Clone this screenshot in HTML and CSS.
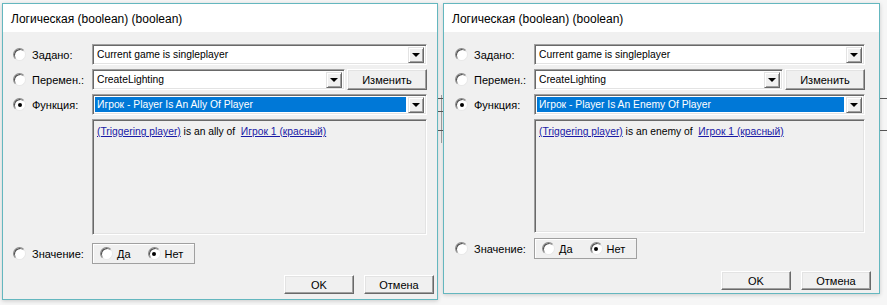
FILE: index.html
```html
<!DOCTYPE html>
<html lang="ru">
<head>
<meta charset="utf-8">
<title>Логическая (boolean)</title>
<link rel="stylesheet" href="styles.css">
</head>
<body>
<div class="screen">
  <div class="dialog dialog--a">
    <div class="titlebar">Логическая (boolean) (boolean)</div>
    <div class="body">
      <div class="row">
        <label class="opt"><span class="radio"></span>Задано:</label>
        <div class="combo combo--full"><span class="combo-text">Current game is singleplayer</span><span class="arrow"></span></div>
      </div>
      <div class="row">
        <label class="opt"><span class="radio"></span>Перемен.:</label>
        <div class="combo combo--short"><span class="combo-text">CreateLighting</span><span class="arrow"></span></div>
        <button class="btn btn--edit">Изменить</button>
      </div>
      <div class="row">
        <label class="opt"><span class="radio radio--on"></span>Функция:</label>
        <div class="combo combo--full"><span class="combo-text combo-text--sel">Игрок - Player Is An Ally Of Player</span><span class="arrow"></span></div>
      </div>
      <div class="textbox">
        <a class="lnk">(Triggering player)</a> is an ally of&nbsp; <a class="lnk">Игрок 1 (красный)</a>
      </div>
      <div class="row row--value">
        <label class="opt"><span class="radio"></span>Значение:</label>
        <div class="group">
          <span class="gopt"><span class="radio"></span>Да</span>
          <span class="gopt"><span class="radio radio--on"></span>Нет</span>
        </div>
      </div>
      <div class="actions">
        <button class="btn btn--act">OK</button>
        <button class="btn btn--act">Отмена</button>
      </div>
    </div>
  </div>

  <div class="gapdeco">
    <span class="vline"></span>
    <span class="tick t1"></span><span class="tick t2"></span><span class="tick t3"></span>
  </div>

  <div class="dialog dialog--b">
    <div class="titlebar">Логическая (boolean) (boolean)</div>
    <div class="body">
      <div class="row">
        <label class="opt"><span class="radio"></span>Задано:</label>
        <div class="combo combo--full"><span class="combo-text">Current game is singleplayer</span><span class="arrow"></span></div>
      </div>
      <div class="row">
        <label class="opt"><span class="radio"></span>Перемен.:</label>
        <div class="combo combo--short"><span class="combo-text">CreateLighting</span><span class="arrow"></span></div>
        <button class="btn btn--edit">Изменить</button>
      </div>
      <div class="row">
        <label class="opt"><span class="radio radio--on"></span>Функция:</label>
        <div class="combo combo--full"><span class="combo-text combo-text--sel">Игрок - Player Is An Enemy Of Player</span><span class="arrow"></span></div>
      </div>
      <div class="textbox">
        <a class="lnk">(Triggering player)</a> is an enemy of&nbsp; <a class="lnk">Игрок 1 (красный)</a>
      </div>
      <div class="row row--value">
        <label class="opt"><span class="radio"></span>Значение:</label>
        <div class="group">
          <span class="gopt"><span class="radio"></span>Да</span>
          <span class="gopt"><span class="radio radio--on"></span>Нет</span>
        </div>
      </div>
      <div class="actions">
        <button class="btn btn--act">OK</button>
        <button class="btn btn--act">Отмена</button>
      </div>
    </div>
  </div>

  <div class="gapdeco gapdeco--end">
    <span class="tick t1"></span><span class="tick t3"></span>
  </div>
</div>
</body>
</html>
```

FILE: styles.css
```css
html, body {
  margin: 0;
  padding: 0;
}
body {
  background: #f6f6f6;
  font-family: "Liberation Sans", Arial, sans-serif;
  font-size: 11px;
  color: #000;
  width: 887px;
  height: 305px;
  overflow: hidden;
}
.screen {
  display: flex;
  align-items: flex-start;
  padding: 3px 0 0 2px;
}
.dialog {
  border: 1px solid #64b7bf;
  background: #f0f0f0;
  display: flex;
  flex-direction: column;
  box-shadow: 0 1px 4px rgba(0,0,0,0.18);
  flex-shrink: 0;
}
.dialog--a {
  width: 434px;
  height: 295px;
}
.dialog--b {
  width: 435px;
  height: 289px;
}
.titlebar {
  background: #fff;
  height: 28px;
  line-height: 31px;
  padding-left: 8px;
  font-size: 12px;
  font-family: "Liberation Sans", Arial, sans-serif;
}
.body {
  padding: 12px 0 0 10px;
  display: flex;
  flex-direction: column;
}
.dialog--b .body {
  padding-left: 11px;
}
.row {
  display: flex;
  align-items: center;
  height: 21px;
  margin-bottom: 4px;
}
.opt {
  width: 79px;
  display: flex;
  align-items: center;
  gap: 6px;
  flex-shrink: 0;
}
.radio {
  width: 11px;
  height: 11px;
  border-radius: 50%;
  background: #fff;
  border: 1px solid;
  border-color: #8a8a8a #e8e8e8 #e8e8e8 #8a8a8a;
  box-shadow: inset 1px 1px 0 #505050;
  display: inline-flex;
  align-items: center;
  justify-content: center;
  flex-shrink: 0;
}
.radio--on::after {
  content: "";
  width: 4px;
  height: 4px;
  border-radius: 50%;
  background: #000;
}
.combo {
  height: 21px;
  box-sizing: border-box;
  background: #fff;
  border: 1px solid;
  border-color: #a0a0a0 #fff #fff #a0a0a0;
  box-shadow: inset 1px 1px 0 #696969, inset -1px -1px 0 #e3e3e3;
  display: flex;
  align-items: center;
  padding: 2px;
}
.combo--full { width: 335px; }
.combo--short { width: 253px; }
.dialog--b .combo--full { width: 331px; }
.dialog--b .combo--short { width: 249px; }
.combo-text {
  flex: 1;
  height: 15px;
  line-height: 15px;
  padding-left: 2px;
  white-space: nowrap;
  overflow: hidden;
  font-size: 10.3px;
}
.combo-text--sel {
  background: #0078d7;
  color: #fff;
  margin-right: 2px;
}
.arrow {
  width: 16px;
  height: 16px;
  box-sizing: border-box;
  background: #f0f0f0;
  border: 1px solid;
  border-color: #e3e3e3 #696969 #696969 #e3e3e3;
  box-shadow: inset 1px 1px 0 #fff, inset -1px -1px 0 #a0a0a0;
  display: flex;
  align-items: center;
  justify-content: center;
  flex-shrink: 0;
}
.arrow::after {
  content: "";
  width: 0;
  height: 0;
  border-left: 4px solid transparent;
  border-right: 4px solid transparent;
  border-top: 4px solid #000;
  margin-top: 1px;
}
.btn {
  font-family: "Liberation Sans", Arial, sans-serif;
  font-size: 11px;
  color: #000;
  background: #f0f0f0;
  border: 1px solid;
  border-color: #fff #696969 #696969 #fff;
  box-shadow: inset -1px -1px 0 #a0a0a0, inset 1px 1px 0 #e3e3e3;
  padding: 0;
  box-sizing: border-box;
}
.btn--edit {
  width: 80px;
  height: 21px;
  margin-left: 2px;
}
.textbox {
  width: 335px;
  height: 116px;
  box-sizing: border-box;
  border: 1px solid;
  border-color: #a0a0a0 #fff #fff #a0a0a0;
  box-shadow: inset 1px 1px 0 #696969, inset -1px -1px 0 #e3e3e3;
  margin-left: 79px;
  padding: 5px 4px;
  line-height: 14px;
  font-size: 10.3px;
}
.dialog--b .textbox {
  width: 331px;
  height: 114px;
}
.lnk {
  color: #1a1aa6;
  text-decoration: underline;
}
.row--value {
  margin-top: 8px;
  margin-bottom: 0;
}
.dialog--b .row--value {
  margin-top: 5px;
}
.group {
  width: 103px;
  height: 21px;
  box-sizing: border-box;
  border: 1px solid #a0a0a0;
  box-shadow: inset 1px 1px 0 #fff;
  display: flex;
  align-items: center;
  padding-left: 7px;
  gap: 17px;
}
.gopt {
  display: flex;
  align-items: center;
  gap: 4px;
}
.actions {
  display: flex;
  justify-content: flex-end;
  gap: 10px;
  margin-top: 11px;
  padding-right: 3px;
}
.dialog--b .actions {
  margin-top: 12px;
  padding-right: 8px;
}
.btn--act {
  width: 70px;
  height: 19px;
}
.gapdeco {
  width: 5px;
  height: 300px;
  position: relative;
  flex-shrink: 0;
}
.gapdeco--end {
  width: 7px;
}
.vline {
  position: absolute;
  left: 3px;
  top: 92px;
  width: 1px;
  height: 48px;
  background: #9a9a9a;
}
.tick {
  position: absolute;
  left: 0;
  width: 100%;
  height: 1px;
  background: #555;
}
.t1 { top: 95px; }
.t2 { top: 108px; }
.t3 { top: 127px; }
```
